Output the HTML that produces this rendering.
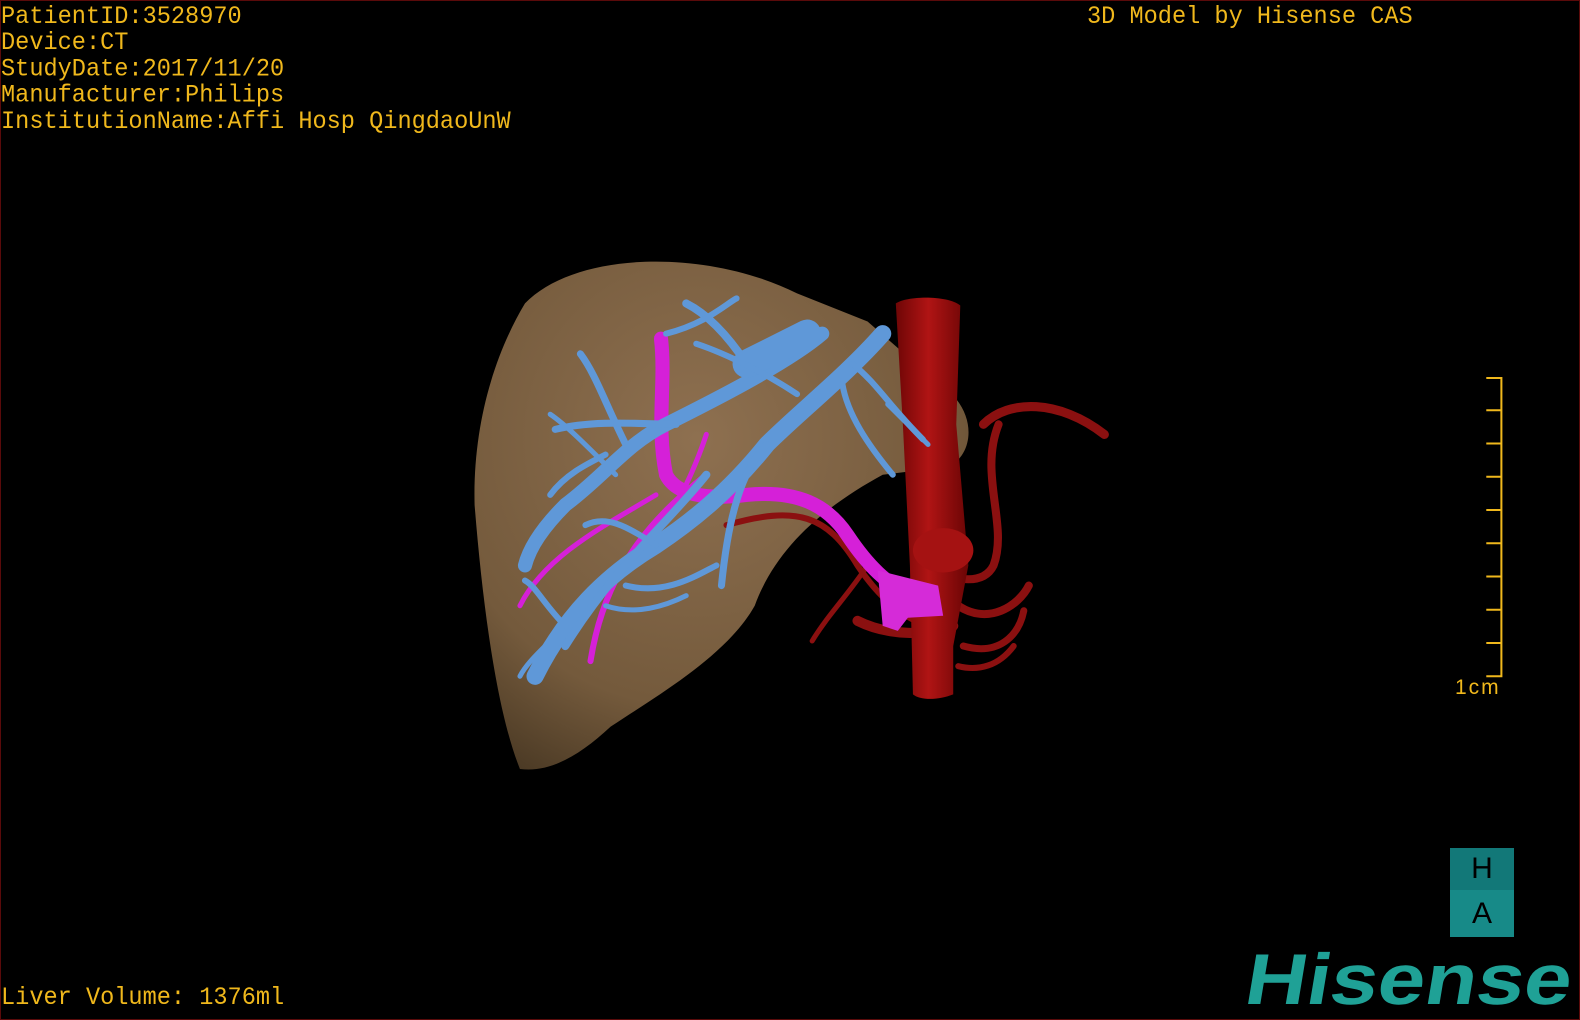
<!DOCTYPE html>
<html><head><meta charset="utf-8"><style>
html,body{margin:0;padding:0;background:#000;}
#root{position:relative;width:1580px;height:1020px;background:#000;overflow:hidden;box-sizing:border-box;border:1px solid #5a0a0a;}
.t{position:absolute;left:0;font-family:"Liberation Mono",monospace;font-size:23.6px;color:#f0b81c;line-height:25px;white-space:pre;letter-spacing:0;transform:scaleY(1.05);transform-origin:left top;}
svg{position:absolute;left:0;top:0;}
</style></head><body><div id="root">
<svg width="1580" height="1020" viewBox="0 0 1568 1012">
<defs>
<radialGradient id="lv" cx="0.45" cy="0.35" r="0.75">
<stop offset="0" stop-color="#8e7050"/><stop offset="0.7" stop-color="#745a3c"/><stop offset="1" stop-color="#4a3924"/>
</radialGradient>
<linearGradient id="ao" x1="0" x2="1"><stop offset="0" stop-color="#6e0606"/><stop offset="0.45" stop-color="#b01414"/><stop offset="1" stop-color="#6a0505"/></linearGradient>
</defs>
<path d="M520,300 C570,248 700,245 790,290 L860,318 L948,395 C968,420 962,452 940,462 L875,470 C820,500 770,540 748,600 C720,650 650,690 605,720 C575,748 545,766 515,762 C492,705 478,600 470,500 C468,420 490,350 520,300 Z" fill="url(#lv)"/>
<g fill="none" stroke-linecap="round" stroke="#8b1010">
<path d="M975,420 C1000,395 1050,395 1095,430" stroke-width="9"/>
<path d="M990,420 C970,470 1000,520 985,560 C975,580 950,575 920,565" stroke-width="8"/>
<path d="M720,520 C790,500 820,510 850,560 C870,590 900,620 930,620" stroke-width="6"/>
<path d="M860,560 C840,590 820,610 805,635" stroke-width="5"/>
<path d="M850,615 C880,630 920,630 945,620" stroke-width="10"/>
<path d="M950,600 C980,620 1010,600 1020,580" stroke-width="8"/>
<path d="M955,640 C990,650 1010,630 1015,605" stroke-width="7"/>
<path d="M950,660 C970,665 990,660 1005,640" stroke-width="6"/>
</g>
<path d="M888,300 C900,292 940,292 952,302 L948,420 L960,560 L945,640 L945,688 C930,694 912,694 905,688 L902,560 L895,420 Z" fill="url(#ao)"/>
<ellipse cx="935" cy="545" rx="30" ry="22" fill="#a51212"/>
<g fill="none" stroke="#d520d8" stroke-linecap="round">
<path d="M655,335 C660,380 650,420 660,470 C670,490 700,495 740,490 C790,485 820,500 840,530 C860,560 880,580 905,590" stroke-width="14"/>
<path d="M700,470 C650,510 600,560 585,655" stroke-width="6"/>
<path d="M650,490 C600,520 540,550 515,600" stroke-width="5"/>
<path d="M700,430 C690,460 680,480 670,500" stroke-width="5"/>
</g>
<path d="M870,565 L930,580 L935,610 L900,612 L890,625 L875,620 Z" fill="#d52bd8"/>
<g fill="none" stroke="#5f98d8" stroke-linecap="round" stroke-linejoin="round">
<path d="M875,330 C840,370 790,410 760,440 C720,490 680,520 650,540 C600,570 560,610 530,670" stroke-width="17"/>
<path d="M815,330 C780,360 700,400 660,420 C620,440 600,470 560,500 C540,520 525,540 520,560" stroke-width="14"/>
<path d="M800,330 C780,340 760,350 740,360" stroke-width="28"/>
<path d="M740,360 C720,330 700,310 680,300" stroke-width="8"/>
<path d="M620,440 C600,400 590,370 575,350" stroke-width="7"/>
<path d="M670,420 C640,420 590,415 550,425" stroke-width="7"/>
<path d="M760,440 C730,470 720,530 715,580" stroke-width="7"/>
<path d="M700,470 C660,520 610,560 560,640" stroke-width="8"/>
<path d="M650,540 C620,520 600,510 580,520" stroke-width="6"/>
<path d="M620,580 C660,590 690,570 710,560" stroke-width="6"/>
<path d="M560,620 C540,600 530,580 520,575" stroke-width="6"/>
<path d="M845,360 C870,380 880,400 915,435" stroke-width="6"/>
<path d="M835,380 C840,410 860,440 885,470" stroke-width="6"/>
<path d="M790,390 C760,370 720,350 690,340" stroke-width="6"/>
<path d="M600,450 C580,460 560,470 545,490" stroke-width="6"/>
<path d="M660,330 C700,320 720,300 730,295" stroke-width="6"/>
<path d="M610,470 C580,440 560,420 545,410" stroke-width="5"/>
<path d="M540,640 C530,650 520,660 515,670" stroke-width="5"/>
<path d="M600,600 C630,610 660,600 680,590" stroke-width="5"/>
<path d="M880,400 C900,420 910,430 920,440" stroke-width="5"/>
</g>
<g fill="none" stroke="#f0b81c" stroke-width="2">
<path d="M1474,374 H1489 V670 H1474"/>
<path d="M1474,406 H1489 M1474,439 H1489 M1474,472 H1489 M1474,505 H1489 M1474,538 H1489 M1474,571 H1489 M1474,604 H1489 M1474,637 H1489"/>
</g>
</svg>
<div class="t" style="top:3px;">PatientID:3528970
Device:CT
StudyDate:2017/11/20
Manufacturer:Philips
InstitutionName:Affi Hosp QingdaoUnW</div>
<div class="t" style="top:3px;left:1086px;">3D Model by Hisense CAS</div>
<div class="t" style="top:984px;">Liver Volume: 1376ml</div>
<div style="position:absolute;left:1454px;top:675px;font-family:'Liberation Sans',sans-serif;font-size:21px;color:#f0b81c;letter-spacing:2px;">1cm</div>
<div style="position:absolute;left:1449px;top:847px;width:64px;height:42px;background:#127878;color:#000;font-family:'Liberation Sans',sans-serif;font-size:30px;text-align:center;line-height:42px;">H</div>
<div style="position:absolute;left:1449px;top:889px;width:64px;height:47px;background:#178a88;color:#000;font-family:'Liberation Sans',sans-serif;font-size:30px;text-align:center;line-height:47px;">A</div>
<div style="position:absolute;left:1252px;top:939px;font-family:'Liberation Sans',sans-serif;font-weight:bold;font-size:72px;color:#1fa196;line-height:80px;transform-origin:left top;transform:scaleX(1.18) skewX(-8deg);white-space:nowrap;">Hisense</div>
</div></body></html>
